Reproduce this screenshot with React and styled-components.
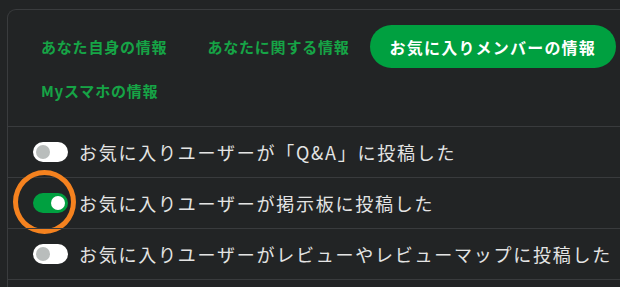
import React, { useState } from 'react';
import styled, { createGlobalStyle } from 'styled-components';

const GlobalStyle = createGlobalStyle`
  html, body {
    margin: 0;
    padding: 0;
    background: #222425;
    overflow: hidden;
  }
  body {
    font-family: "Noto Sans CJK JP", "Noto Sans", sans-serif;
  }
`;

const Page = styled.div`
  width: 620px;
  height: 287px;
  padding: 9px 0 0 7px;
  box-sizing: border-box;
  overflow: hidden;
`;

const Panel = styled.div`
  border: 1px solid #3a3c3e;
  border-right: none;
  border-bottom: none;
  border-top-left-radius: 9px;
  height: 300px;
  box-sizing: border-box;
`;

const TabBar = styled.div`
  display: flex;
  flex-wrap: wrap;
  row-gap: 1px;
  padding: 15px 0 14px 13px;
`;

const Tab = styled.button`
  height: 43px;
  padding: 0 20px;
  border: none;
  border-radius: 22px;
  background: ${p => (p.$active ? '#00a040' : 'transparent')};
  color: ${p => (p.$active ? '#ffffff' : '#16a446')};
  font-family: inherit;
  font-weight: 700;
  font-size: ${p => (p.$active ? '16px' : '15px')};
  letter-spacing: ${p => (p.$active ? '1.2px' : '0.8px')};
  white-space: nowrap;
  cursor: pointer;
  display: flex;
  align-items: center;
`;

const Row = styled.div`
  position: relative;
  display: flex;
  align-items: center;
  gap: 11px;
  height: 50px;
  padding-left: 25px;
  border-top: 1px solid #393b3d;
`;

const Track = styled.span`
  position: relative;
  width: 35px;
  height: 20px;
  border-radius: 10px;
  background: ${p => (p.$on ? '#00a040' : '#ffffff')};
  flex: none;
`;

const Knob = styled.span`
  position: absolute;
  top: 3px;
  left: ${p => (p.$on ? '18px' : '3px')};
  width: 14px;
  height: 14px;
  border-radius: 50%;
  background: ${p => (p.$on ? '#ffffff' : '#b9bdbc')};
`;

const Label = styled.span`
  color: #e4e4e4;
  font-size: 18px;
  letter-spacing: 1.75px;
  white-space: nowrap;
`;

const Highlight = styled.span`
  position: absolute;
  left: 5px;
  top: -8px;
  width: 53px;
  height: 54px;
  border: 5px solid #f5821f;
  border-radius: 50%;
  pointer-events: none;
`;

const tabs = ['あなた自身の情報', 'あなたに関する情報', 'お気に入りメンバーの情報', 'Myスマホの情報'];

const items = [
  { label: 'お気に入りユーザーが「Q&A」に投稿した', on: false },
  { label: 'お気に入りユーザーが掲示板に投稿した', on: true, mark: true },
  { label: 'お気に入りユーザーがレビューやレビューマップに投稿した', on: false },
];

const App = () => {
  const [active, setActive] = useState(2);
  return (
    <Page>
      <GlobalStyle />
      <Panel>
        <TabBar>
          {tabs.map((t, i) => (
            <Tab key={t} $active={i === active} onClick={() => setActive(i)}>
              {t}
            </Tab>
          ))}
        </TabBar>
        {items.map(it => (
          <Row key={it.label}>
            <Track $on={it.on}>
              <Knob $on={it.on} />
            </Track>
            <Label>{it.label}</Label>
            {it.mark && <Highlight />}
          </Row>
        ))}
        <Row />
      </Panel>
    </Page>
  );
};

export default App;
